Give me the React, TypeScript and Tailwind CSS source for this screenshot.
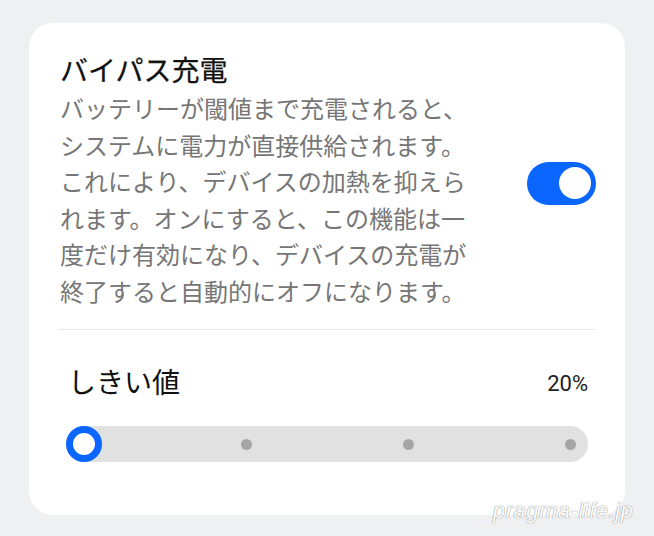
const STOPS = [20, 40, 60, 80];

function Toggle({ on }: { on: boolean }) {
  return (
    <div
      className={`flex h-[43px] w-[69px] shrink-0 items-center rounded-full px-[5px] ${
        on ? "justify-end bg-[#0a66ff]" : "justify-start bg-[#c8c8c8]"
      }`}
    >
      <div className="h-[32px] w-[32px] rounded-full bg-white" />
    </div>
  );
}

function StepSlider({ value }: { value: number }) {
  return (
    <div className="flex h-[36px] items-center justify-between rounded-full bg-[#e1e1e1]">
      {STOPS.map((stop) => (
        <div key={stop} className="flex h-[36px] w-[36px] items-center justify-center">
          {stop === value ? (
            <div className="h-[36px] w-[36px] rounded-full border-[7px] border-[#0a66ff] bg-white" />
          ) : (
            <div className="h-[11px] w-[11px] rounded-full bg-[#a6a6a6]" />
          )}
        </div>
      ))}
    </div>
  );
}

export default function App() {
  const threshold = 20;

  return (
    <div className="relative min-h-screen w-full bg-[#eff0f2] px-[29px] pt-[23px] font-['Roboto','Noto_Sans_CJK_JP',sans-serif]">
      <div className="w-[596px] rounded-[24px] bg-white px-[29px] pb-[53px] pt-[32px]">
        <div className="flex items-center justify-between">
          <div className="pl-[2px]">
            <h1 className="text-[28px] font-normal leading-[34px] text-[#111111] [-webkit-text-stroke:0.25px_#111111]">
              バイパス充電
            </h1>
            <p className="mt-[3px] w-[412px] text-[24px] leading-[36.5px] text-[#767676]">
              バッテリーが閾値まで充電されると、システムに電力が直接供給されます。これにより、デバイスの加熱を抑えられます。オンにすると、この機能は一度だけ有効になり、デバイスの充電が終了すると自動的にオフになります。
            </p>
          </div>
          <Toggle on />
        </div>

        <div className="mt-[18px] h-px bg-[#ebebeb]" />

        <div className="px-[8px] pt-[36px]">
          <div className="flex items-center justify-between">
            <span className="pl-[2px] text-[28px] leading-[36px] text-[#111111]">しきい値</span>
            <span className="text-[22px] leading-[36px] text-[#222222]">{threshold}%</span>
          </div>
          <div className="mt-[24px]">
            <StepSlider value={threshold} />
          </div>
        </div>
      </div>

      <span className="absolute left-[493px] top-[494px] font-['Liberation_Sans',sans-serif] text-[22px] italic tracking-[0.5px] text-white [text-shadow:0_0_1px_#8a8a8a,0_0_1px_#8a8a8a]">
        pragma-life.jp
      </span>
    </div>
  );
}
